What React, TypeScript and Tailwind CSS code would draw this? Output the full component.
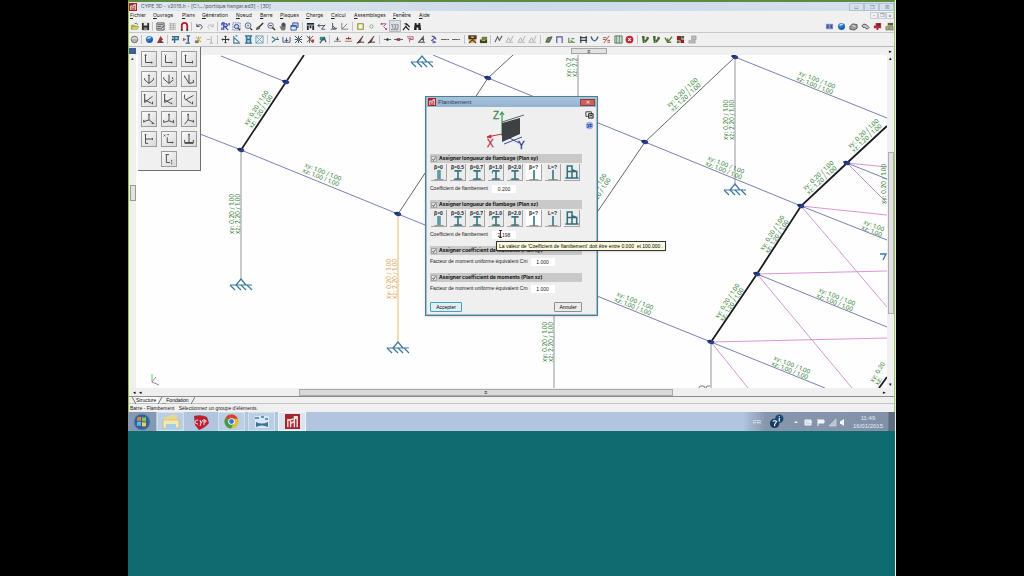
import React, { useState, ReactNode } from 'react';

// Shared shapes
const ARROW = 'M1 8 L4 2 L6 6 L9 1';

// Toolbar drawings, all on a 10x10 grid
const icons: Record<string, ReactNode> = {
  open: (
    <>
      <path d="M1 3h3l1 1h3v4H1z" fill="#b9a94a" />
      <path d="M1 8l2-3h7L8 8z" fill="#d9d27a" stroke="#6f8a35" strokeWidth=".5" />
      <path d="M5 2q2-2 4 1" fill="none" stroke="#4a7a35" />
    </>
  ),
  save: (
    <>
      <path d="M1 1h8v8H1z" fill="#2c2f2a" />
      <path d="M3 1h4v3H3z" fill="#e8e8e8" />
      <path d="M3 6h4v3H3z" fill="#888" />
    </>
  ),
  list: (
    <>
      <path d="M1 1h8v8H1z" fill="#d5d9d5" stroke="#555" />
      <path d="M2 3h6M2 5h4M2 7h3" stroke="#555" />
      <path d="M5 8l4-4" stroke="#333" />
    </>
  ),
  grid: <path d="M1 2h8M1 4h8M1 6h8M1 8h8M3 1v8M6 1v8" stroke="#a5a5a5" strokeWidth=".8" />,
  magnet: (
    <>
      <path d="M2 9V4a3 3 0 0 1 6 0v5" fill="none" stroke="#b3202c" strokeWidth="2" />
      <path d="M1 8h2v2H1zM7 8h2v2H7z" fill="#444" />
    </>
  ),
  undo: <path d="M2 2v3h3M2 5q4-4 6 0q0 2-2 3" fill="none" stroke="#4a4f66" strokeWidth="1.1" />,
  redo: <path d="M8 2v3H5M8 5q-4-4-6 0q0 2 2 3" fill="none" stroke="#b9bcc4" strokeWidth="1.1" />,
  zoomAll: (
    <>
      <path d="M1 1h3M1 1v3M9 1v3M1 9V6" stroke="#2f3c9b" strokeWidth="1.4" />
      <path d="M3 9V2h3q2 2 0 3H4l4 4" fill="none" stroke="#4450b8" strokeWidth="1.4" />
    </>
  ),
  zoomWin: (
    <>
      <path d="M1 1h8v8H1z" fill="none" stroke="#4553a8" strokeDasharray="1 1" />
      <circle cx="5" cy="5" r="2.4" fill="#c5d3f0" stroke="#33427f" />
      <path d="M7 7l2 2" stroke="#333" strokeWidth="1.4" />
    </>
  ),
  lens: (
    <>
      <circle cx="4.5" cy="4" r="3.2" fill="#e2e8f2" stroke="#555d77" />
      <path d="M7 7l2 2" stroke="#333" strokeWidth="1.4" />
      <circle cx="4.5" cy="4" r="1" fill="#6873a5" />
    </>
  ),
  brush: (
    <>
      <path d="M9 1L4 6" stroke="#333" strokeWidth="1.6" />
      <path d="M1 9q0-4 3-4l2 2q-1 2-5 2z" fill="#5c6456" />
    </>
  ),
  lensMinus: (
    <>
      <circle cx="4" cy="4" r="3" fill="#eef0f6" stroke="#545c82" />
      <path d="M2.5 4h3" stroke="#333" />
      <path d="M6 6l3 3" stroke="#333" strokeWidth="1.6" />
    </>
  ),
  hand: <path d="M3 9L1 5l2 1V2h1v3V1h1v4V1h1v4V2h1v4q0 2-1 3z" fill="#7d7d84" stroke="#3c3c44" strokeWidth=".5" />,
  windows: (
    <>
      <path d="M3 1h6v5H3z" fill="#b9cff0" stroke="#34539a" />
      <path d="M1 4h6v5H1z" fill="#dbe9f8" stroke="#34539a" />
      <path d="M1 4.5h6" stroke="#34539a" strokeWidth="1.5" />
    </>
  ),
  table: (
    <>
      <path d="M1 1h8v2H1zM1 4h2v5H1zM7 4h2v5H7zM4 4h2v3H4z" fill="#23262c" />
      <path d="M1 3.5h8" stroke="#6677a0" />
    </>
  ),
  dims: <path d="M1 4h8M3 2L1 4l2 2M5 8l4-5M5 8h4" fill="none" stroke="#454a50" />,
  axes: <path d="M4 1v6h5M2 8h6M4 4l3 3" fill="none" stroke="#4d5258" />,
  angle: <path d="M2 1v7h7M2 8l6-6" fill="none" stroke="#75797e" />,
  square: <path d="M2 2h6v6H2z" fill="#f7f7d0" stroke="#8d8a2b" strokeWidth="1.2" />,
  dot: <circle cx="5" cy="5" r="1.8" fill="#fff" stroke="#77a06b" />,
  purple: (
    <>
      <path d="M2 2h6L5 5l3 3" fill="none" stroke="#a0559a" />
      <path d="M2 1h2v2H2zM7 7h2v2H7z" fill="#c04b63" />
    </>
  ),
  digits: <path d="M1 3h2v4M4 3h2v4H4M7 3h2v4H7M1 8.5h8" fill="none" stroke="#6e7280" strokeWidth=".8" />,
  hammer: (
    <>
      <path d="M2 2l3-1 4 4-1 1-2-2" fill="#222" />
      <path d="M5 4L1 9M4 5l4 4" stroke="#222" strokeWidth="1.3" />
    </>
  ),
  binoculars: (
    <>
      <path d="M2 1h2v2h2V1h2l1 8H6V6H4v3H1z" fill="#222" />
    </>
  ),
  ball: (
    <>
      <circle cx="5" cy="5" r="3.6" fill="#b8b9b0" stroke="#67685e" />
      <path d="M2 4q3-2 6 0" stroke="#fff" fill="none" />
    </>
  ),
  globe: (
    <>
      <circle cx="5" cy="5" r="4" fill="#2f74bd" />
      <path d="M2 4q2-3 5-2q-1 3-5 2z" fill="#c9e2f7" />
      <path d="M4 8q3 0 4-3" stroke="#123c73" fill="none" />
    </>
  ),
  redBall: (
    <>
      <path d="M5 1l3 4-2 1 3 3H1l2-4z" fill="#a33b3b" />
      <path d="M5 5l3 4H4z" fill="#4a4d52" />
    </>
  ),
  blueP: (
    <>
      <path d="M1 2h8M4 2v7M4 5h4V2" fill="none" stroke="#2e6f96" strokeWidth="1.6" />
      <path d="M1 4h2v2H1z" fill="#333" />
    </>
  ),
  blueI: (
    <>
      <path d="M5 1h4M7 1v7M4 9h5" stroke="#2e5f96" strokeWidth="1.6" />
      <path d="M1 3l4 2-4 2z" fill="#b06060" />
    </>
  ),
  spark: (
    <>
      <path d="M2 2l6 6M8 2L2 8M5 1v8" stroke="#d0b45a" strokeWidth="1.2" />
      <path d="M1 6h4v3H1z" fill="#6d7d83" />
    </>
  ),
  faintI: <path d="M2 5h4M7 1v8M5 9h4" stroke="#b9bdc0" strokeWidth="1.2" />,
  move: <path d="M5 1v8M1 5h8M4 2l1-1 1 1M4 8l1 1 1-1M2 4L1 5l1 1M8 4l1 1-1 1" fill="none" stroke="#333" strokeWidth="1.1" />,
  frameA: <path d="M2 1v8h7M2 3l6 5M4 1h2" fill="none" stroke="#3f7895" strokeWidth="1.2" />,
  frameB: (
    <>
      <path d="M1 1h8v8H1z" fill="#bcd9e8" />
      <path d="M1 1h8M1 9h8M3 1v8M7 1v8M3 5h4" stroke="#2d6f93" strokeWidth="1.4" />
    </>
  ),
  frameC: <path d="M1 1l8 8M9 1L1 9M1 1h8v8H1z" fill="none" stroke="#69a0b8" />,
  cut: <path d="M1 2l4 3-4 3M5 5h4M7 2v3" fill="none" stroke="#3b7c85" strokeWidth="1.2" />,
  supports: <path d="M1 2v6h8V2M3 6h4M5 3v5" fill="none" stroke="#4d4f80" />,
  star: (
    <>
      <path d="M1 1l8 8M9 1L1 9M5 1v8M1 5h8" stroke="#3d4450" />
      <circle cx="5" cy="5" r="1.4" fill="#3d8f95" />
    </>
  ),
  starRed: (
    <>
      <path d="M1 1l7 8M8 1L1 8M4 1v8" stroke="#555" />
      <path d="M6 5h3v3H6z" fill="#c03a3a" />
    </>
  ),
  greenP: (
    <>
      <path d="M2 2h6v4H2z" fill="#3b8f72" />
      <path d="M2 9l5-6 2 5" fill="none" stroke="#31546e" strokeWidth="1.2" />
    </>
  ),
  node: (
    <>
      <path d="M1 7h8" stroke="#777" />
      <path d="M5 2v4M3.5 4l1.5 2 1.5-2" stroke="#4d4d4d" fill="none" />
    </>
  ),
  nodeRed: (
    <>
      <path d="M1 7h8" stroke="#777" />
      <path d="M2 4h6M5 2v3" stroke="#b33c3c" strokeWidth="1.2" />
    </>
  ),
  pen: (
    <>
      <path d="M8 1L3 7 1 9l4-1" fill="#6e4038" stroke="#4c3530" />
      <path d="M5 8h4" stroke="#333" />
    </>
  ),
  dash: (
    <>
      <path d="M1 5h8" stroke="#555" />
      <path d="M4 3.5h2v3H4z" fill="#333" />
    </>
  ),
  dashRed: (
    <>
      <path d="M0 5h10" stroke="#555" />
      <path d="M3 3.5h4v3H3z" fill="#943c4b" />
    </>
  ),
  pinkS: <path d="M1 2h7v3H4v3M2 4h4" fill="none" stroke="#b55f8c" strokeWidth="1.1" />,
  hatch: <path d="M1 8h8M2 8l5-6v6M4 5h4" fill="none" stroke="#4a5a4c" strokeWidth="1.2" />,
  bolt: <path d="M3 1l4 2-4 3 4 2-3 1M5 1l3 4" fill="none" stroke="#53549a" strokeWidth="1.2" />,
  dots: <path d="M1 5h2M4 5h2M7 5h2M0 5h10" stroke="#666" strokeWidth="1.2" strokeDasharray="1.5 1" />,
  envelope: (
    <>
      <path d="M1 1h8v8H1z" fill="#cdbf6e" />
      <path d="M1 1l8 8M9 1L1 9M1 1h8v3H1z" stroke="#4c3420" fill="none" strokeWidth="1.2" />
      <path d="M4 5h3v2H4z" fill="#a13c2b" />
    </>
  ),
  tag: (
    <>
      <path d="M3 2h6v3H3z" fill="#767b2e" />
      <path d="M1 5h8v4H1z" fill="#3f4423" />
      <path d="M3 6h4" stroke="#cfd266" />
    </>
  ),
  chart: <path d={ARROW} fill="none" stroke="#55635a" strokeWidth="1.2" />,
  chartOff: <path d="M1 8L4 3l2 4 3-6M1 8h8" fill="none" stroke="#a9aeab" />,
  eraser: <path d="M2 8l2-5 5-1-3 6z" fill="#6b8a54" stroke="#33402a" strokeWidth=".8" />,
  portal: <path d="M2 9V2h6v7" fill="none" stroke="#5357a0" strokeWidth="1.3" />,
  green: <path d="M1 8h8M2 3v5M4 6l3 2M5 4h3" fill="none" stroke="#5c8a4b" strokeWidth="1.2" />,
  beamH: <path d="M2 1v8M8 1v8M1 3h8M1 6h8" stroke="#37404a" strokeWidth="1.3" />,
  smile: <path d="M1 2q4 9 8 0M1 2l2 3M9 2L7 5" fill="none" stroke="#44547f" strokeWidth="1.3" />,
  percent: <path d="M8 1L2 9M1 3h4M1 5h3M6 6h3M6 8h3" stroke="#a04a4a" />,
  sheet: (
    <>
      <path d="M1 1h8v8H1z" fill="#cfe0cc" stroke="#54705a" />
      <path d="M3 1v8M6 1v8" stroke="#54705a" strokeWidth=".8" />
    </>
  ),
  stop: (
    <>
      <circle cx="5" cy="5" r="4.3" fill="#c22630" />
      <path d="M3.5 3.5l3 3M6.5 3.5l-3 3" stroke="#fff" strokeWidth="1.2" />
    </>
  ),
  leaf: (
    <>
      <path d="M1 1h3v8H2zM4 6l4-4 1 2-4 5z" fill="#3c6b2e" />
      <path d="M6 2h2v2H6z" fill="#8d4b2f" />
    </>
  ),
  leafLine: <path d="M1 3l3 5 5-6M4 4v4h4" fill="none" stroke="#5b7d37" strokeWidth="1.5" />,
  leafRed: (
    <>
      <path d="M1 1h5v5H1zM5 5h4v4H5z" fill="#8c2424" />
      <path d="M6 1h3v3H6zM1 7h3v2H1z" fill="#3b6b2a" />
    </>
  ),
  grayBox: <path d="M4 1h5v4H4zM1 6h7v3H1z" fill="#b9bcb8" stroke="#8d918d" strokeWidth=".6" />,
  cube: (
    <>
      <path d="M1 2h8v6H1z" fill="#8592cb" />
      <path d="M2 3h2v4H2zM6 3h2v4H6z" fill="#465299" />
    </>
  ),
  help: (
    <>
      <circle cx="5" cy="5" r="4.2" fill="#9fb6e6" />
      <path d="M2 4h2v3H2M5 4h3M5 6h3M6 3v4" fill="none" stroke="#2f4ba0" />
    </>
  ),
  copy: (
    <>
      <path d="M1 2h6v5H1z" fill="#f4f4f4" stroke="#333" />
      <path d="M4 4h5v5H4z" fill="#b9bcb4" stroke="#222" />
      <path d="M5 6h3" stroke="#222" />
    </>
  ),
  printer: (
    <>
      <path d="M1 5l3-3 5 1v4L6 9 1 8z" fill="#9a9c9a" stroke="#3e423e" strokeWidth=".8" />
      <path d="M4 4l3 1" stroke="#fff" />
    </>
  ),
  roll: (
    <>
      <path d="M1 4q2-3 5-1l3 3-2 2-3-2q-2 1-3-2z" fill="#c4c6c4" stroke="#3e423e" strokeWidth=".9" />
    </>
  ),
  book: (
    <>
      <path d="M3 1h6v6H6v2H4V7H1V4h2z" fill="#bd2833" />
      <path d="M5 2h3v2H5z" fill="#2c3a66" />
    </>
  ),
  boxes: (
    <>
      <path d="M3 1h6v3H3z" fill="#5d6135" />
      <path d="M1 5h3v4H1zM5 5h4v4H5z" fill="#a9ab7d" stroke="#5d6135" strokeWidth=".6" />
    </>
  ),
};

type Group = { width: string; items: string[] };

const toolbarTop: Group[] = [
  { width: 'w-[21px]', items: ['open', 'save'] },
  { width: 'w-[34px]', items: ['list', 'grid', 'magnet'] },
  { width: 'w-[21px]', items: ['undo', 'redo'] },
  { width: 'w-[80px]', items: ['zoomAll', 'zoomWin', 'lens', 'brush', 'lensMinus', 'hand', 'windows'] },
  { width: 'w-[45px]', items: ['table', 'dims', 'axes', 'angle'] },
  { width: 'w-[68px]', items: ['square', 'dot', 'purple', 'digits', 'hammer', 'binoculars'] },
];

const toolbarBottom: Group[] = [
  { width: 'w-[10px]', items: ['ball'] },
  { width: 'w-[21px]', items: ['globe', 'redBall'] },
  { width: 'w-[45px]', items: ['blueP', 'blueI', 'spark', 'faintI'] },
  { width: 'w-[45px]', items: ['move', 'frameA', 'frameB', 'frameC'] },
  { width: 'w-[57px]', items: ['cut', 'supports', 'star', 'starRed', 'greenP'] },
  { width: 'w-[45px]', items: ['node', 'nodeRed', 'pen', 'pen'] },
  { width: 'w-[80px]', items: ['dash', 'dashRed', 'pinkS', 'hatch', 'bolt', 'dots', 'dots'] },
  { width: 'w-[21px]', items: ['envelope', 'tag'] },
  { width: 'w-[45px]', items: ['chart', 'chartOff', 'chartOff', 'chartOff'] },
  { width: 'w-[92px]', items: ['eraser', 'portal', 'green', 'beamH', 'smile', 'percent', 'sheet', 'stop'] },
  { width: 'w-[57px]', items: ['leaf', 'leaf', 'leafLine', 'leafRed', 'grayBox'] },
];

const menus = [
  { label: 'Fichier', width: 'w-[23px]' },
  { label: 'Ouvrage', width: 'w-[29px]' },
  { label: 'Plans', width: 'w-[20px]' },
  { label: 'Génération', width: 'w-[34px]' },
  { label: 'Noeud', width: 'w-[24px]' },
  { label: 'Barre', width: 'w-[20px]' },
  { label: 'Plaques', width: 'w-[26px]' },
  { label: 'Charge', width: 'w-[25px]' },
  { label: 'Calcul', width: 'w-[23px]' },
  { label: 'Assemblages', width: 'w-[39px]' },
  { label: 'Fenêtre', width: 'w-[26px]' },
  { label: 'Aide', width: 'w-[20px]' },
];

// Axis triads on the view palette, 16x16 grid
const views = [
  'M4 3v9h8M4 3h1M11 11v2M3 4h2',
  'M4 4v8h8M3 3l1 1 1-1M11 11v2',
  'M4 3v9h8M3 4h2M12 10v3',
  'M8 3v10M8 13L3 9M8 13l5-4M3 7v2M13 7v2M7 4h2',
  'M8 3v10M8 13L2 8M8 13l5-4M2 6v2M12 6v2',
  'M8 3v10M8 13L3 5M8 13l5-1M3 4v2M13 9v3',
  'M3 3v9l9-7M3 9l8 4M2 3h2M12 11v3',
  'M3 3v9l9-5M3 9l7 4M2 3h2M11 12v2',
  'M3 3q-1 4 1 6l9-5M5 9l6 4M12 11v3',
  'M8 2v7l-6 2M8 9l5 4M7 3h2M2 9v3M11 13h3',
  'M8 2v8l-6 2M8 10l6 2M7 3h2M2 9v3M13 9v3',
  'M7 2v7l6 2M7 9l-4 5M6 3h2M13 9v3',
  'M4 3v10M4 8h8M3 3h2M4 13h3M12 7v2',
  'M6 6v6h7M2 3l2 2M4 3L2 5M6 3h2M12 11v2',
  'M8 2v11M3 12h10M7 3h2M3 9v3M13 9v3M3 13h10',
  'M5 3v9h4M4 3h4M11 9v2M11 12v2',
];

const blue = '#6a70a8';
const gray = '#8b8b8b';
const pink = '#d58ad5';

const lines = [
  { d: 'M221 56L286 82', c: blue },
  { d: 'M200 134L241 150L398 214L425 225', c: blue },
  { d: 'M433 55L488 78L645 142L801 206L887 240', c: blue },
  { d: 'M735 57L887 118', c: blue },
  { d: 'M597 296L711 342L825 388', c: blue },
  { d: 'M757 274L887 327', c: blue },
  { d: 'M847 163L887 179', c: blue },
  { d: 'M241 150V280', c: gray },
  { d: 'M578 55V97', c: gray },
  { d: 'M735 57V184', c: gray },
  { d: 'M711 342V388', c: gray },
  { d: 'M554 316V388', c: gray },
  { d: 'M398 214V343', c: '#e0b860' },
  { d: 'M398 214L488 78L513 55', c: '#555' },
  { d: 'M598 211L645 142L735 57', c: '#555' },
  { d: 'M847 163L887 167', c: pink },
  { d: 'M847 163L887 203', c: pink },
  { d: 'M801 206L887 215', c: pink },
  { d: 'M801 206L887 307', c: pink },
  { d: 'M757 274L887 271', c: pink },
  { d: 'M757 274L852 388', c: pink },
  { d: 'M711 342L887 338', c: pink },
  { d: 'M711 342L748 388', c: pink },
];

const nodes = [
  [241, 150],
  [286, 82],
  [398, 214],
  [488, 78],
  [645, 142],
  [735, 57],
  [801, 206],
  [757, 274],
  [711, 342],
  [847, 163],
];

const supports = [
  [241, 280],
  [398, 343],
  [422, 57],
  [735, 185],
];

// Two-line bar labels: start of the second line, angle, coefficients
const labels = [
  { x: 252, y: 129, a: -57, lines: ['xy: 0.20 / 1.00', 'xz: 1.20 / 1.00'] },
  { x: 302, y: 172, a: 22, lines: ['xy: 1.00 / 1.00', 'xz: 1.00 / 1.00'] },
  { x: 240, y: 234, a: -90, lines: ['xy: 0.20 / 1.00', 'xz: 2.20 / 1.00'] },
  { x: 673, y: 112, a: -43, lines: ['xy: 0.20 / 1.00', 'xz: 1.20 / 1.00'] },
  { x: 734, y: 140, a: -90, lines: ['xy: 0.20 / 1.00', 'xz: 2.20 / 1.00'] },
  { x: 796, y: 80, a: 22, lines: ['xy: 1.00 / 1.00', 'xz: 1.00 / 1.00'] },
  { x: 705, y: 165, a: 22, lines: ['xy: 1.00 / 1.00', 'xz: 1.00 / 1.00'] },
  { x: 854, y: 153, a: -43, lines: ['xy: 0.20 / 1.00', 'xz: 1.20 / 1.00'] },
  { x: 809, y: 195, a: -43, lines: ['xy: 0.20 / 1.00', 'xz: 1.20 / 1.00'] },
  { x: 768, y: 254, a: -57, lines: ['xy: 0.20 / 1.00', 'xz: 1.20 / 1.00'] },
  { x: 723, y: 322, a: -57, lines: ['xy: 0.20 / 1.00', 'xz: 1.20 / 1.00'] },
  { x: 614, y: 301, a: 22, lines: ['xy: 1.00 / 1.00', 'xz: 1.00 / 1.00'] },
  { x: 816, y: 297, a: 22, lines: ['xy: 1.00 / 1.00', 'xz: 1.00 / 1.00'] },
  { x: 771, y: 365, a: 22, lines: ['xy: 1.00 / 1.00', 'xz: 1.00 / 1.00'] },
  { x: 861, y: 229, a: 22, lines: ['xy: 1.00', 'xz: 1.00'] },
  { x: 553, y: 362, a: -90, lines: ['xy: 0.20 / 1.00', 'xz: 2.20 / 1.00'] },
  { x: 577, y: 77, a: -90, lines: ['xy: 0.2', 'xz: 2.2'] },
  { x: 590, y: 212, a: -57, lines: ['xy: 0.20 / 1.00', 'xz: 1.20 / 1.00'] },
  { x: 892, y: 204, a: -90, lines: ['xy: 0.20 / 1.00'] },
  { x: 878, y: 386, a: -57, lines: ['xy: 0.20', 'xz:'] },
];

const profiles = ['β=0', 'β=0.5', 'β=0.7', 'β=1.0', 'β=2.0', 'β=?', 'L=?', ''];

const Icon = ({ name }: { name: string }) => (
  <svg viewBox="0 0 10 10" className="h-[9px] w-[9px]">
    {icons[name]}
  </svg>
);

const Toolbar = ({ groups }: { groups: Group[] }) => (
  <div className="flex items-center">
    {groups.map((group, index) => (
      <React.Fragment key={index}>
        {index > 0 && <span className="mx-[2px] h-[9px] w-px bg-[#c4c4c4]" />}
        <div className={`flex justify-between ${group.width}`}>
          {group.items.map((item, i) => (
            <button
              key={i}
              aria-label={item}
              className={`flex h-[10px] w-[10px] items-center justify-center ${
                item === 'digits' ? 'bg-[#dcdee2] outline outline-[#b5b8be]' : ''
              }`}
            >
              <Icon name={item} />
            </button>
          ))}
        </div>
      </React.Fragment>
    ))}
  </div>
);

const ProfileDrawing = ({ index }: { index: number }) => {
  if (index === 7) {
    return (
      <svg viewBox="0 0 16 17" className="h-[17px] w-4">
        <path d="M3 15V2h5v13M3 8h10v7M1 15h14M8 6l5 2" fill="none" stroke="#2f6f7c" strokeWidth="1.6" />
      </svg>
    );
  }
  return (
    <svg viewBox="0 0 16 11" className="h-[11px] w-4">
      {index === 0 && <path d="M6 0h4v10H6z" fill="#5f9aa3" />}
      {index > 0 && index < 5 && (
        <path d="M4 1h8M8 1v9M4 10h8" stroke="#347784" strokeWidth="1.8" />
      )}
      {index >= 5 && <path d="M8 0v11" stroke="#347784" strokeWidth="1.8" />}
      {index === 3 && <path d="M4 1v3" stroke="#347784" />}
      <path d="M3 10.5h10" stroke="#777" strokeWidth=".8" />
    </svg>
  );
};

const Section = ({ title, children }: { title: string; children: ReactNode }) => {
  const [checked, setChecked] = useState(true);
  return (
    <section>
      <label className="flex h-[9px] items-center gap-[2px] bg-[#c9c9c9] px-px font-['Inter',sans-serif] font-bold leading-[9px] whitespace-nowrap text-[#111]">
        <span className="relative flex">
          <input
            type="checkbox"
            checked={checked}
            onChange={() => setChecked(!checked)}
            className="h-[6px] w-[6px] appearance-none border border-[#a5a5a5] bg-[#e0e0e0]"
          />
          {checked && (
            <svg viewBox="0 0 6 6" className="pointer-events-none absolute inset-0 h-[6px] w-[6px]">
              <path d="M1.5 3l1 1.5L4.500 1.500" fill="none" stroke="#555" strokeWidth=".9" />
            </svg>
          )}
        </span>
        {title}
      </label>
      {children}
    </section>
  );
};

const Profiles = () => (
  <div className="mt-px flex gap-[3px] px-px">
    {profiles.map((profile, index) => (
      <button
        key={index}
        aria-label={profile || 'portique'}
        className={`flex h-[17px] w-4 flex-col items-center justify-end border-r border-b border-[#a5a5a5] ${
          index === 5 ? 'bg-white' : 'bg-[#ececec]'
        }`}
      >
        {profile && <span className="text-[5px] font-bold leading-[6px] whitespace-nowrap">{profile}</span>}
        <ProfileDrawing index={index} />
      </button>
    ))}
  </div>
);

const Field = ({ id, label, value, gap }: { id: string; label: string; value: string; gap: string }) => (
  <div className={`flex h-[9px] items-center ${gap}`}>
    <label htmlFor={id} className="whitespace-nowrap">
      {label}
    </label>
    <input id={id} defaultValue={value} className="h-2 w-6 bg-white text-center outline-none" />
  </div>
);

const Dialog = () => (
  <div
    role="dialog"
    aria-label="Flambement"
    className="absolute top-[41px] left-[289px] flex w-[173px] flex-col border border-[#4f7f8c] bg-[#9fbcd3] px-px pb-px text-[5px] leading-[7px] text-[#222] shadow"
  >
    <header className="flex h-[10px] items-center gap-[2px] bg-gradient-to-b from-[#a9c3dc] to-[#93b3d0] px-px">
      <AppLogo className="h-2 w-2" />
      <h2 className="flex-1 text-[6px] text-[#2c3d50]">Flambement</h2>
      <button
        aria-label="Fermer"
        className="flex h-[7px] w-[15px] items-center justify-center border border-[#8a4040] bg-[#cf5f59] text-[5px] leading-none text-white"
      >
        ✕
      </button>
    </header>
    <div className="flex bg-[#efefef] pt-[3px] pl-[3px]">
      <div className="flex-1">
        <svg viewBox="0 0 44 40" className="mx-auto h-10 w-11" fontFamily="Liberation Sans, sans-serif">
          <path d="M18 2v24M16 5l2-3 2 3" fill="none" stroke="#3e9a55" strokeWidth="1.2" />
          <path d="M18 24L3 27M3 27l4-2v3z" fill="#c03540" stroke="#c03540" />
          <path d="M18 24l17 9M20 34l18-7" stroke="#3b4a9b" />
          <path d="M18 13l18-5v16l-18 8z" fill="#3d4144" />
          <path d="M18 12l22-7" stroke="#49705a" />
          <text x="9" y="9" fontSize="10" fill="#3b8f50" stroke="#3b8f50" strokeWidth=".3">Z</text>
          <text x="3" y="37" fontSize="10" fill="#b5303e" stroke="#b5303e" strokeWidth=".3">X</text>
          <text x="34" y="39" fontSize="10" fill="#2d3594" stroke="#2d3594" strokeWidth=".3">Y</text>
        </svg>
        <div className="mt-1 flex flex-col">
          <Section title="Assigner longueur de flambage (Plan xy)">
            <Profiles />
            <div className="pt-[3px] pb-[7px]">
              <Field id="coef-xy" label="Coefficient de flambement" value="0.200" gap="gap-1" />
            </div>
          </Section>
          <Section title="Assigner longueur de flambage (Plan xz)">
            <Profiles />
            <div className="pt-[3px] pb-[7px]">
              <Field id="coef-xz" label="Coefficient de flambement" value="2.198" gap="gap-1" />
            </div>
          </Section>
          <Section title="Assigner coefficient de moments (Plan xy)">
            <div className="pt-[2px] pb-[7px]">
              <Field id="moment-xy" label="Facteur de moment uniforme équivalent Cm" value="1.000" gap="gap-[3px]" />
            </div>
          </Section>
          <Section title="Assigner coefficient de moments (Plan xz)">
            <div className="pt-[2px] pb-2">
              <Field id="moment-xz" label="Facteur de moment uniforme équivalent Cm" value="1.000" gap="gap-[3px]" />
            </div>
          </Section>
        </div>
        <div className="flex justify-between pt-px pb-[2px]">
          <button className="h-[10px] w-8 rounded-[1px] border border-[#3fa3bd] bg-[#e3eef2] leading-[8px] text-black">
            Accepter
          </button>
          <button className="h-[10px] w-7 rounded-[1px] border border-[#8e8e8e] bg-[#ececec] leading-[8px] text-black">
            Annuler
          </button>
        </div>
      </div>
      <div className="flex w-[14px] flex-col items-center gap-[2px]">
        <button aria-label="Copier">
          <Icon name="copy" />
        </button>
        <button aria-label="Aide">
          <Icon name="help" />
        </button>
      </div>
    </div>
  </div>
);

const AppLogo = ({ className }: { className: string }) => (
  <svg viewBox="0 0 16 16" className={className}>
    <path d="M0 0h16v16H0z" fill="#a3262c" />
    <path d="M3 14V6h3v8M10 14V3h3v11M3 7l10-3M6 10l4-2" fill="none" stroke="#f3dede" strokeWidth="1.5" />
  </svg>
);

const Model = () => (
  <svg
    viewBox="136 55 751 333"
    preserveAspectRatio="xMinYMin slice"
    className="block h-[333px] w-full bg-[#fefefe]"
    fontFamily="Inter, sans-serif"
  >
    {lines.map((line) => (
      <path key={line.d} d={line.d} fill="none" stroke={line.c} strokeWidth=".9" />
    ))}
    <path d="M304 55L286 82L241 150" fill="none" stroke="#1c1c1c" strokeWidth="1.7" />
    <path d="M711 342L757 274L801 206L847 163L887 126M879 388L887 377" fill="none" stroke="#1c1c1c" strokeWidth="1.8" />
    {supports.map(([x, y]) => (
      <g key={`${x}-${y}`} stroke="#3a789b" fill="none" strokeWidth="1.2">
        <path d={`M${x - 11} ${y + 5}h22M${x - 5} ${y + 5}l5-6 5 6`} />
        <path d={`M${x - 11} ${y + 5}l5 5M${x - 5} ${y + 5}l5 5M${x} ${y + 5}l5 5M${x + 6} ${y + 5}l5 5`} />
      </g>
    ))}
    {nodes.map(([x, y]) => (
      <g key={`${x}-${y}`}>
        <ellipse cx={x} cy={y} rx="3.3" ry="2" fill="#27408c" transform={`rotate(15 ${x} ${y})`} />
        <path d={`M${x - 4} ${y - 1}h4`} stroke="#111d4a" />
      </g>
    ))}
    {labels.map((label, index) => (
      <g
        key={index}
        transform={`translate(${label.x} ${label.y}) rotate(${label.a})`}
        fontSize="6"
        fill="#2f7d36"
      >
        {label.lines.map((line, i) => (
          <text key={line} y={i * 6 - 6}>
            {line}
          </text>
        ))}
      </g>
    ))}
    <g transform="translate(397 299) rotate(-90)" fontSize="6" fill="#dca04a">
      <text y="-6">xy: 0.20 / 1.00</text>
      <text y="0">xz: 2.20 / 1.00</text>
    </g>
    <path d="M880 254h6l-3 6" fill="none" stroke="#3f74b5" strokeWidth="1.3" />
    <path d="M152 382v-8" stroke="#6fc46f" />
    <path d="M152 382l7 3" stroke="#c46f8c" />
    <path d="M152 382l4-5" stroke="#8888a8" />
    <path d="M699 388q0-2 2-2h2q2 0 2 2M706 388q0-2 2-2h2" fill="none" stroke="#777" />
  </svg>
);

const ViewPalette = () => (
  <div className="absolute top-0 left-[9px] flex w-[63px] flex-wrap justify-center gap-1 border-r border-b border-[#6f6f6f] bg-[#f0f0f0] px-[2px] pt-1 pb-[3px]">
    {views.map((view, index) => (
      <button
        key={index}
        aria-label={`Vue ${index + 1}`}
        className="h-4 w-4 border border-[#9c9c9c] bg-gradient-to-br from-[#fafafa] to-[#d9d9d9]"
      >
        <svg viewBox="0 0 16 16" className="h-full w-full">
          <path d={view} fill="none" stroke="#4a4a4a" strokeWidth="1.1" />
        </svg>
      </button>
    ))}
  </div>
);

const Taskbar = () => (
  <footer className="flex h-[19px] items-stretch bg-[#b1c5df]">
    <button aria-label="Démarrer" className="flex w-7 items-center justify-center bg-[#8799b1]">
      <svg viewBox="0 0 18 18" className="h-[18px] w-[18px]">
        <circle cx="9" cy="9" r="8" fill="#2f6298" stroke="#5d88b0" />
        <path d="M4 5q2-2 4-1v4q-2-1-4 0z" fill="#e5823c" />
        <path d="M9 4q2 1 4 0v4q-2 1-4 0z" fill="#8cc152" />
        <path d="M4 9q2-1 4 0v4q-2-1-4 0z" fill="#6ab0e8" />
        <path d="M9 9q2 1 4 0v4q-2 1-4 0z" fill="#f2cf4a" />
      </svg>
    </button>
    <div className="flex flex-1 gap-[3px] pl-px">
      <button aria-label="Explorateur" className="flex w-[27px] items-center justify-center border border-[#d5e0ee] bg-[#bccee4]">
        <svg viewBox="0 0 18 16" className="h-4 w-[18px]">
          <path d="M2 3h5l1-2h7v12H2z" fill="#e8d98a" />
          <path d="M1 6h16v8H1z" fill="#f2e9b0" stroke="#c9b35f" strokeWidth=".6" />
          <path d="M4 10h10v5H4z" fill="#a8cde8" />
        </svg>
      </button>
      <button aria-label="CYPE" className="flex w-7 items-center justify-center">
        <svg viewBox="0 0 16 16" className="h-4 w-4">
          <path d="M1 2q7-2 13 1l2 6q-4 5-10 7L2 11z" fill="#b92230" />
          <path d="M5 6q-3 0-3 2t3 2M7 6l1 3 2-3M8 9l-1 3M11 5v6M11 6q3 0 2 2h-2" fill="none" stroke="#f6dada" />
        </svg>
      </button>
      <button aria-label="Chrome" className="flex w-[27px] items-center justify-center border border-[#d5e0ee] bg-[#bccee4]">
        <svg viewBox="0 0 16 16" className="h-[15px] w-[15px]">
          <circle cx="8" cy="8" r="7.5" fill="#e2bd35" />
          <path d="M8 8L1.5 4.2A7.5 7.5 0 0 1 14.8 5H8z" fill="#d34336" />
          <path d="M8 8L1.5 4.2A7.5 7.5 0 0 0 7.5 15.5l3-6z" fill="#429b4d" />
          <circle cx="8" cy="8" r="3.5" fill="#fff" />
          <circle cx="8" cy="8" r="2.6" fill="#3b76c4" />
        </svg>
      </button>
      <button aria-label="Document" className="flex w-[27px] items-center justify-center border border-[#d5e0ee] bg-[#bccee4]">
        <svg viewBox="0 0 16 14" className="h-[14px] w-4">
          <path d="M1 1h14v12H1z" fill="#d8e8f6" />
          <path d="M1 3h4M7 2h3M11 4h3" stroke="#4676a6" strokeWidth="1.5" />
          <path d="M2 7q6 3 12 0v5q-6-3-12 0z" fill="#3f7099" />
        </svg>
      </button>
      <button aria-label="CYPE 3D" className="flex w-[28px] items-center justify-center border border-[#f0f4f9] bg-[#dbe5f1]">
        <AppLogo className="h-[15px] w-[15px]" />
      </button>
    </div>
    <div className="flex w-[152px] items-center justify-end gap-1 bg-gradient-to-r from-[#b1c5df] via-[#8796ad] via-15% to-[#8091a8] text-[6px] leading-2 text-[#e6edf5]">
      <span>FR</span>
      <svg viewBox="0 0 16 16" className="mx-1 h-[15px] w-[15px]">
        <circle cx="6" cy="10" r="5" fill="#17395a" />
        <circle cx="11" cy="5" r="4.5" fill="#1d4a73" />
        <path d="M4 8q2-2 4 0l-2 3v2M11 2v1M11 4v4" fill="none" stroke="#d8e8f6" strokeWidth="1.3" />
      </svg>
      <svg viewBox="0 0 56 10" className="h-[10px] w-[56px]">
        <path d="M2 6l2-2 2 2z" fill="#f0f4f9" />
        <path d="M13 3h6v5h-6zM15 5h5" fill="#cfd8e2" stroke="#f3f6fa" />
        <path d="M26 9V2M26 3h6v3h-6" fill="#f3f6fa" stroke="#f3f6fa" />
        <path d="M37 9h7V2z" fill="#b7c2cf" stroke="#dfe6ee" strokeWidth=".6" />
        <path d="M48 4h1l3-2v7l-3-2h-1z" fill="#f3f6fa" />
      </svg>
      <time className="w-8 text-center text-[6px]">
        11:49
        <br />
        16/01/2015
      </time>
      <span className="h-full w-[7px] border-l border-[#6c7a8e] bg-[#5f6c7f]" />
    </div>
  </footer>
);

const App = () => {
  return (
    <div className="flex min-h-screen justify-center bg-black font-['Liberation_Sans',Arial,sans-serif] text-[5px] leading-[7px]">
      <div className="flex w-3/4 flex-col border-r border-[#e8f0e0] bg-[#0f6b70]">
        <div className="flex flex-col border-t-2 border-r border-l border-t-[#5d8a3c] border-r-[#9cc46c] border-l-[#8fbf45] bg-[#f0f0f0]">
          {/* Title bar */}
          <header className="flex h-[9px] items-center gap-1 bg-gradient-to-r from-[#dfe6ef] via-[#cddaea] to-[#d5e0ed] font-['Inter',sans-serif]">
            <AppLogo className="h-2 w-2" />
            <h1 className="flex-1 text-[#4c5866]">CYPE 3D - v2015.h - [C:\...\portique hangar.ed3] - [3D]</h1>
            <div className="flex">
              {['▭', '❐', '☒'].map((sign) => (
                <button key={sign} aria-label={sign} className="h-2 w-[15px] border border-[#b3c0d0] leading-[6px] text-[#6b7684]">
                  {sign}
                </button>
              ))}
            </div>
          </header>

          {/* Menu bar */}
          <nav className="flex h-[9px] items-center pl-px font-['Inter',sans-serif]">
            {menus.map((menu) => (
              <button key={menu.label} className={`text-left whitespace-nowrap text-[#222] ${menu.width}`}>
                <span className="underline">{menu.label[0]}</span>
                {menu.label.slice(1)}
              </button>
            ))}
            <div className="ml-auto flex">
              {['-', '❐', '×'].map((sign) => (
                <button key={sign} aria-label={sign} className="h-[7px] w-2 border border-[#c9ced6] leading-[5px] text-[#667]">
                  {sign}
                </button>
              ))}
            </div>
          </nav>

          {/* Toolbars */}
          <div className="flex h-[13px] items-center justify-between border-b border-[#c9c9c9]">
            <Toolbar groups={toolbarTop} />
            <Toolbar groups={[{ width: 'w-[70px]', items: ['cube', 'globe', 'printer', 'roll', 'book', 'boxes'] }]} />
          </div>
          <div className="flex h-[14px] items-center border-b border-[#b9b9b9]">
            <Toolbar groups={toolbarBottom} />
          </div>

          {/* Workspace */}
          <main className="relative flex flex-col">
            <div className="flex h-2 items-center justify-between">
              <span className="h-[6px] w-[7px] bg-[#3c6091]" />
              <span className="ml-auto h-[6px] w-9 border border-[#a5a5a5] bg-[#e2e2e2] text-center leading-[4px]">≡</span>
              <span className="w-[287px] pr-[2px] text-right">▸</span>
            </div>
            <div className="flex">
              <div className="flex w-[7px] flex-col items-center">
                <span className="text-[#345]">▴</span>
                <span className="mt-[123px] h-4 w-[6px] border border-[#9a9a9a] bg-[#e2e2e2]" />
              </div>
              <div className="relative min-w-0 flex-1">
                <Model />
                <Dialog />
                <div
                  role="tooltip"
                  className="absolute top-[186px] left-[360px] border border-[#333] bg-[#fbfbdf] px-[2px] leading-2 whitespace-nowrap text-black shadow"
                >
                  La valeur de 'Coefficient de flambement' doit être entre 0.000 &nbsp;et 100.000 .
                </div>
                <svg viewBox="0 0 5 8" className="absolute top-[175px] left-[362px] h-2 w-[5px]">
                  <path d="M1 .5h3M2.5 0v8M1 7.5h3" stroke="#111" strokeWidth=".8" />
                </svg>
              </div>
              <div className="flex w-[7px] flex-col items-center">
                <span>▴</span>
                <span className="mt-[90px] h-[162px] w-[6px] border border-[#b0b0b0] bg-[#e2e2e2]" />
                <span className="mt-auto">▾</span>
              </div>
            </div>
            <div className="flex h-[9px] items-center border-b border-[#8c8c8c] bg-[#efefef] px-1">
              <span className="w-[166px]">◂ &nbsp;◂</span>
              <span className="h-[7px] w-[374px] border border-[#a9a9a9] bg-[#d9d9d9] text-center leading-[5px]">≡</span>
              <span className="mr-1 ml-auto">▸</span>
            </div>
            <ViewPalette />
          </main>

          {/* Tabs and status */}
          <div className="flex h-[7px] items-center border-b border-[#c4c4c4] pl-[3px]">
            <svg viewBox="0 0 4 7" className="h-[7px] w-1">
              <path d="M0 0l4 7" stroke="#555" strokeWidth=".8" />
            </svg>
            <button className="bg-white pr-[2px] leading-[6px]">Structure</button>
            <svg viewBox="0 0 8 7" className="h-[7px] w-2">
              <path d="M0 7l4-7M4 7h4" stroke="#555" strokeWidth=".8" />
            </svg>
            <button className="pr-[2px] leading-[6px]">Fondation</button>
            <svg viewBox="0 0 4 7" className="h-[7px] w-1">
              <path d="M0 7l4-7" stroke="#555" strokeWidth=".8" />
            </svg>
          </div>
          <p className="h-2 pl-px leading-2 text-[#222]">Barre - Flambement &nbsp; Sélectionnez un groupe d'éléments.</p>
        </div>
        <Taskbar />
      </div>
    </div>
  );
};

export default App;
